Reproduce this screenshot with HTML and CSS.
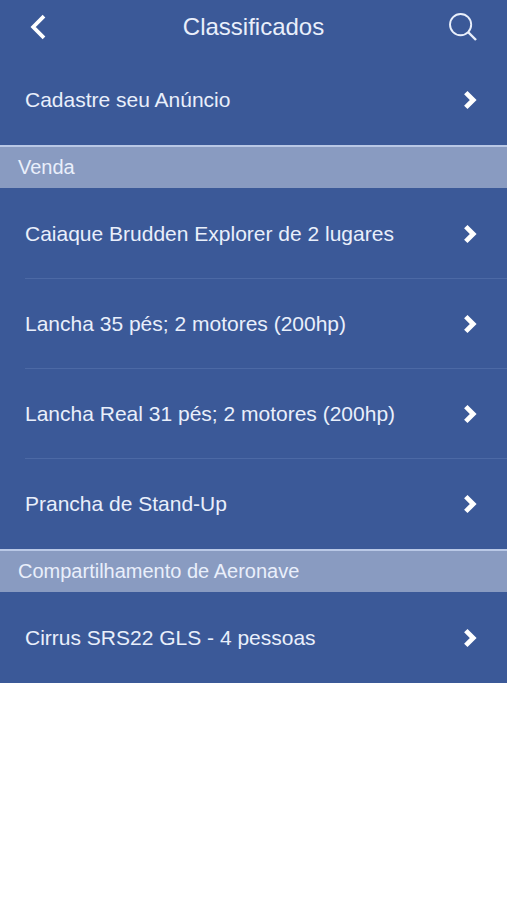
FILE: index.html
```html
<!DOCTYPE html>
<html lang="pt-BR">
<head>
<meta charset="utf-8">
<meta name="viewport" content="width=device-width, initial-scale=1">
<title>Classificados</title>
<link rel="stylesheet" href="styles.css">
</head>
<body>
<svg class="sprite" aria-hidden="true">
  <symbol id="chevron" viewBox="0 0 14 20"><path d="M2.8 2.6 10.2 10 2.8 17.4" fill="none" stroke="currentColor" stroke-width="4.8"/></symbol>
</svg>
<header class="bar">
  <button class="icon-button" type="button" aria-label="Voltar">
    <svg class="back" viewBox="0 0 16 26"><path d="M14 2.2 3.2 13 14 23.8" fill="none" stroke="currentColor" stroke-width="3.8"/></svg>
  </button>
  <h1 class="title">Classificados</h1>
  <button class="icon-button" type="button" aria-label="Buscar">
    <svg class="search" viewBox="0 0 28 28"><circle cx="11.6" cy="11.6" r="10.6" fill="none" stroke="currentColor" stroke-width="1.9"/><path d="M19 19 27 27" stroke="currentColor" stroke-width="2.4"/></svg>
  </button>
</header>
<main>
  <ul class="list">
    <li class="item"><a class="row" href="#">Cadastre seu Anúncio<svg class="chevron"><use href="#chevron"/></svg></a></li>
  </ul>
  <h2 class="section">Venda</h2>
  <ul class="list">
    <li class="item"><a class="row" href="#">Caiaque Brudden Explorer de 2 lugares<svg class="chevron"><use href="#chevron"/></svg></a></li>
    <li class="item"><a class="row" href="#">Lancha 35 pés; 2 motores (200hp)<svg class="chevron"><use href="#chevron"/></svg></a></li>
    <li class="item"><a class="row" href="#">Lancha Real 31 pés; 2 motores (200hp)<svg class="chevron"><use href="#chevron"/></svg></a></li>
    <li class="item"><a class="row" href="#">Prancha de Stand-Up<svg class="chevron"><use href="#chevron"/></svg></a></li>
  </ul>
  <h2 class="section">Compartilhamento de Aeronave</h2>
  <ul class="list">
    <li class="item"><a class="row" href="#">Cirrus SRS22 GLS - 4 pessoas<svg class="chevron"><use href="#chevron"/></svg></a></li>
  </ul>
</main>
</body>
</html>
```
FILE: styles.css
```css
* { box-sizing: border-box; }
body {
  margin: 0;
  background: #fff;
  color: #e9effb;
  font-family: "Liberation Sans", Arial, sans-serif;
}
.sprite { position: absolute; width: 0; height: 0; }
.bar {
  display: grid;
  grid-template-columns: 1fr auto 1fr;
  align-items: center;
  height: 54px;
  background: #3b5998;
}
.title { margin: 0; font-size: 24px; line-height: 28px; font-weight: 400; }
.icon-button {
  display: flex;
  align-items: center;
  height: 44px;
  padding: 0 30px;
  border: 0;
  background: none;
  color: inherit;
}
.icon-button:last-child { justify-self: end; }
.icon-button:first-child { justify-self: start; }
.back { width: 16px; height: 26px; color: #fff; }
.search { width: 28px; height: 28px; }
.list {
  margin: 0;
  padding: 0 0 1px 25px;
  list-style: none;
  background: #3b5998;
}
.item { border-top: 1px solid #4c69a5; }
.item:first-child { border-top-color: transparent; }
.row {
  display: flex;
  align-items: center;
  justify-content: space-between;
  height: 89px;
  padding-right: 30px;
  color: inherit;
  font-size: 21px;
  line-height: 24px;
  text-decoration: none;
}
.chevron { width: 14px; height: 20px; flex: none; color: #fff; }
.section {
  margin: 0;
  height: 43px;
  padding: 0 18px;
  border-top: 2px solid #b9c8e6;
  background: #899bc1;
  font-size: 20px;
  line-height: 41px;
  font-weight: 400;
}
```
